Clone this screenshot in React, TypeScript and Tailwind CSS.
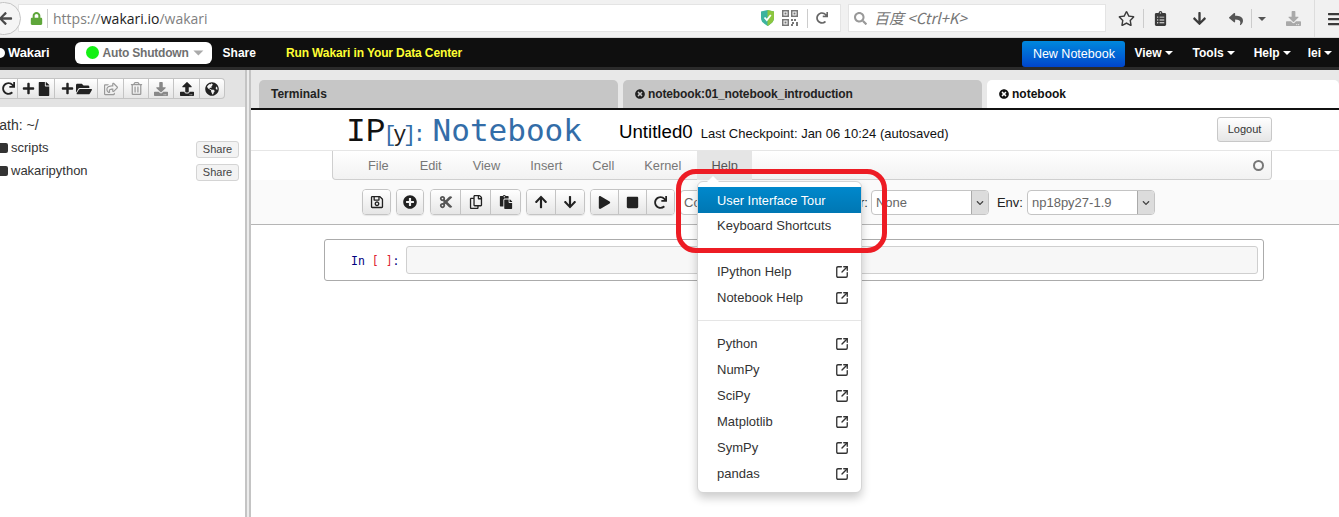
import React from "react";
import {
  FaArrowLeft, FaLock, FaRedo, FaSearch, FaRegStar, FaClipboardList, FaArrowDown, FaReply, FaDownload, FaBars,
  FaPlus, FaFile, FaFolderOpen, FaRegShareSquare, FaRegTrashAlt, FaUpload, FaGlobeAmericas, FaTimesCircle, FaRegSave, FaPlusCircle,
  FaCut, FaRegCopy, FaPaste, FaArrowUp, FaPlay, FaStop, FaChevronDown,
} from "react-icons/fa";
import { SquareArrowOutUpRight } from "lucide-react";

const Caret = ({ c = "border-t-white" }: { c?: string }) => (
  <span className={`ml-[3px] inline-block h-0 w-0 border-x-[4px] border-t-[4px] border-x-transparent align-middle ${c}`} />
);

function Shield() {
  return (
    <svg width="13" height="16" viewBox="0 0 13 16">
      <path d="M0 1.5 L6.5 0 L13 1.5 V8 C13 12 9 14.5 6.5 16 C4 14.5 0 12 0 8 Z" fill="#3db39e" />
      <path d="M6.5 0 L13 1.5 V8 C13 12 9 14.5 6.5 16 Z" fill="#8cc63f" />
      <path d="M3.5 7.5 L5.8 10 L9.8 5" stroke="#fff" strokeWidth="1.8" fill="none" />
    </svg>
  );
}

function Qr() {
  return (
    <svg width="16" height="16" viewBox="0 0 16 16" fill="#777">
      <path d="M0 0h7v7H0z M1.5 1.5v4h4v-4z M9 0h7v7H9z M10.5 1.5v4h4v-4z M0 9h7v7H0z M1.5 10.5v4h4v-4z" fillRule="evenodd" />
      <path d="M2.5 2.5h2v2h-2z M11.5 2.5h2v2h-2z M2.5 11.5h2v2h-2z M9 9h2v2H9z M12 9h2v2h-2z M10 12h2v2h-2z M14 12h2v4h-2z M9 14h2v2H9z" />
    </svg>
  );
}

function BrowserBar() {
  return (
    <div className="flex h-[38px] items-start border-b border-[#d8d8d8] bg-[#f1f1f1]">
      <div className="relative z-10 -ml-[14px] mt-[2px] flex h-[33px] w-[35px] shrink-0 items-center justify-end rounded-full border border-[#c4c4c4] bg-[#f5f5f5] pr-[7px] text-[#4a4a4a]">
        <FaArrowLeft size={15} />
      </div>
      <div className="-ml-[3px] mt-[4px] flex h-[28px] w-[823px] shrink-0 items-center border border-[#e4e4e4] bg-white pl-[11px]">
        <FaLock size={13} className="text-[#5ea63a]" />
        <span className="ml-[4px] h-[19px] w-px bg-[#ccc]" />
        <span className="ml-[5px] flex-1 font-['Open_Sans'] text-[14px] text-[#808080]">
          https://<span className="text-[#222]">wakari.io</span>/wakari
        </span>
        <Shield />
        <span className="ml-[8px] flex"><Qr /></span>
        <span className="ml-[9px] h-[19px] w-px bg-[#ccc]" />
        <FaRedo size={12} className="ml-[8px] mr-[12px] text-[#666]" />
      </div>
      <div className="ml-[7px] mt-[4px] flex h-[28px] w-[258px] shrink-0 items-center border border-[#e4e4e4] bg-white pl-[5px] text-[15px] italic text-[#777]">
        <FaSearch size={13} className="text-[#999]" />
        <span className="ml-[7px] font-['Noto_Sans_CJK_SC']">百度 &lt;Ctrl+K&gt;</span>
      </div>
      <div className="flex h-[37px] flex-1 items-center text-[#3b3b3b]">
        <FaRegStar size={17} className="ml-[12px]" />
        <span className="ml-[8px] h-[19px] w-px bg-[#ccc]" />
        <FaClipboardList size={15} className="ml-[9px]" />
        <FaArrowDown size={15} className="ml-[24px]" />
        <FaReply size={14} className="ml-[22px] text-[#555]" />
        <span className="ml-[8px] h-[19px] w-px bg-[#ccc]" />
        <span className="ml-[3px] flex"><Caret c="border-t-[#555]" /></span>
        <FaDownload size={15} className="ml-[20px] text-[#a9a9a9]" />
        <span className="ml-[13px] h-[37px] w-px bg-[#ddd]" />
        <FaBars size={16} className="ml-[12px]" />
      </div>
    </div>
  );
}

function TopNav() {
  return (
    <div className="flex h-[32px] items-center border-b-[3px] border-[#2b2b2b] bg-[#0f0f0f] text-[12px] font-bold text-white">
      <span className="-ml-[5px] h-[10px] w-[10px] rounded-full bg-white" />
      <span className="ml-[3px] text-[13px] tracking-[-0.1px]">Wakari</span>
      <div className="ml-[25px] flex h-[22px] w-[137px] items-center rounded-[6px] bg-white pl-[11px] text-[#6f6f6f]">
        <span className="h-[13px] w-[13px] rounded-full bg-[#14f014]" />
        <span className="ml-[4px] tracking-[-0.2px]">Auto Shutdown</span>
        <span className="ml-[2px] flex scale-125"><Caret c="border-t-[#aaa]" /></span>
      </div>
      <span className="ml-[11px]">Share</span>
      <span className="ml-[30px] tracking-[-0.12px] text-[#ffff33]">Run Wakari in Your Data Center</span>
      <div className="ml-auto mt-[3px] flex h-[26px] w-[103px] items-center justify-center rounded-[3px] bg-gradient-to-b from-[#0088dd] to-[#0044cc] text-[12.5px] font-normal">
        New Notebook
      </div>
      <span className="ml-[9px]">View<Caret /></span>
      <span className="ml-[20px]">Tools<Caret /></span>
      <span className="ml-[19px]">Help<Caret /></span>
      <span className="ml-[17px] mr-[7px]">lei<Caret /></span>
    </div>
  );
}

const fileButtons = [
  { w: "w-[18px]", icon: <FaRedo size={13} />, extra: "" },
  { w: "w-[37px]", icon: <><FaPlus size={13} /><FaFile size={14} className="ml-[2px]" /></>, extra: "" },
  { w: "w-[43px]", icon: <><FaPlus size={13} /><FaFolderOpen size={16} className="ml-[2px]" /></>, extra: "" },
  { w: "w-[26px]", icon: <FaRegShareSquare size={14} />, extra: "text-[#999]" },
  { w: "w-[25px]", icon: <FaRegTrashAlt size={13} />, extra: "text-[#999]" },
  { w: "w-[25px]", icon: <FaDownload size={14} />, extra: "text-[#888]" },
  { w: "w-[26px]", icon: <FaUpload size={14} />, extra: "" },
  { w: "w-[25px]", icon: <FaGlobeAmericas size={14} />, extra: "" },
];

function Sidebar() {
  return (
    <div className="w-[245px] shrink-0 bg-white">
      <div className="flex h-[37px] items-start bg-[#e3e3e3] pt-[8px]">
        {fileButtons.map((b, i) => (
          <div
            key={i}
            className={`flex h-[21px] items-center justify-center border-y border-r border-[#c4c4c4] bg-gradient-to-b from-white to-[#e6e6e6] text-[#222] last:rounded-r-[4px] ${b.w} ${b.extra}`}
          >
            {b.icon}
          </div>
        ))}
      </div>
      <div className="-ml-[10px] mt-[10px] text-[14px] leading-[16px] text-[#333]">Path: ~/</div>
      {["scripts", "wakaripython"].map((n, i) => (
        <div key={n} className={`flex h-[18px] items-center pr-[6px] text-[13px] text-[#333] ${i === 0 ? "mt-[6px]" : "mt-[5px]"}`}>
          <span className="-ml-[4px] h-[10px] w-[12px] rounded-[2px] bg-[#333]" />
          <span className="ml-[3px]">{n}</span>
          <span className="ml-auto mt-[3px] flex h-[17px] w-[43px] items-center justify-center rounded-[3px] border border-[#d4d4d4] bg-[#f3f3f3] text-[11px] text-[#444]">Share</span>
        </div>
      ))}
    </div>
  );
}

function Tabs() {
  const tab = "flex h-[28px] items-center rounded-t-[5px] text-[12px] font-bold";
  return (
    <div className="flex h-[40px] items-end gap-[5px] border-b-2 border-[#111] bg-[#e8e8e8] pl-[8px]">
      <div className={`${tab} w-[359px] bg-[#c6c6c6] pl-[12px] text-[#222]`}>Terminals</div>
      <div className={`${tab} w-[359px] bg-[#c6c6c6] pl-[12px] tracking-[-0.12px] text-[#222]`}>
        <FaTimesCircle size={10} className="mr-[3px]" />notebook:01_notebook_introduction
      </div>
      <div className={`${tab} flex-1 bg-white pl-[12px] text-[#111]`}>
        <FaTimesCircle size={10} className="mr-[3px]" />notebook
      </div>
    </div>
  );
}

function NotebookHeader() {
  return (
    <div className="flex h-[41px] items-start border-b border-[#e6e6e6] pl-[95px]">
      <div className="flex h-[40px] items-baseline font-['DejaVu_Sans_Mono'] leading-[41px]">
        <span className="font-['Liberation_Mono'] text-[33px] text-[#111]">IP</span>
        <span className="-ml-[2px] w-[41px] font-['Liberation_Mono'] text-[22px] tracking-[-3.5px] text-[#336da8]">[<span className="text-[#222]">y</span>]:</span>
        <span className="ml-[8px] text-[31px] text-[#336da8]">Notebook</span>
      </div>
      <span className="ml-[37px] mt-[9px] text-[18.7px] leading-[26px] text-black">Untitled0</span>
      <span className="ml-[8px] mt-[15px] text-[13px] leading-[18px] text-[#111]">Last Checkpoint: Jan 06 10:24 (autosaved)</span>
      <span className="ml-auto mr-[67px] mt-[7px] flex h-[25px] w-[55px] items-center justify-center rounded-[3px] border border-[#c8c8c8] bg-gradient-to-b from-white to-[#e6e6e6] text-[11px] text-[#333]">Logout</span>
    </div>
  );
}

function MenuBar() {
  const items = [
    ["File", "ml-[35px] pt-[2px]"],
    ["Edit", "ml-[31px] pt-[2px]"],
    ["View", "ml-[31px] pt-[2px]"],
    ["Insert", "ml-[30px] pt-[2px]"],
    ["Cell", "ml-[30px] pt-[2px]"],
    ["Kernel", "ml-[30px] pt-[2px]"],
  ];
  return (
    <div className="relative ml-[81px] mr-[67px] flex h-[29px] items-center rounded-b-[4px] border border-t-0 border-[#cfcfcf] bg-gradient-to-b from-white to-[#f2f2f2] text-[12.8px] text-[#777]">
      {items.map(([t, c]) => <span key={t} className={c}>{t}</span>)}
      <span className="ml-[16px] flex h-[29px] w-[55px] items-center justify-center bg-[#e5e5e5] pt-[2px] text-[#555]">Help</span>
      <span className="absolute right-[7px] top-[9px] h-[11px] w-[11px] rounded-full border-2 border-[#777]" />
    </div>
  );
}

function TB({ groups }: { groups: { w: string; icon: React.ReactNode }[] }) {
  return (
    <div className="flex h-[26px] overflow-hidden rounded-[4px] border border-[#c4c4c4] shadow-[0_1px_1px_rgba(0,0,0,0.08)]">
      {groups.map((g, i) => (
        <div key={i} className={`flex items-center justify-center border-r border-[#c4c4c4] bg-gradient-to-b from-white to-[#e6e6e6] text-[#222] last:border-r-0 ${g.w}`}>{g.icon}</div>
      ))}
    </div>
  );
}

function Select({ w, text }: { w: string; text: string }) {
  return (
    <div className={`flex h-[25px] items-center overflow-hidden rounded-[4px] border border-[#c4c4c4] bg-white text-[13px] text-[#666] ${w}`}>
      <span className="flex-1 pl-[4px] pt-[1px]">{text}</span>
      <span className="flex h-full w-[17px] items-center justify-center border-l border-[#aaa] bg-[#dcdcdc] text-[#444]"><FaChevronDown size={8} /></span>
    </div>
  );
}

function Toolbar() {
  return (
    <div className="flex h-[45px] items-start border-b border-[#b5b5b5] bg-[#fafafa] pl-[111px] pt-[9px]">
      <TB groups={[{ w: "w-[27px]", icon: <FaRegSave size={14} /> }]} />
      <div className="ml-[5px]"><TB groups={[{ w: "w-[26px]", icon: <FaPlusCircle size={14} /> }]} /></div>
      <div className="ml-[6px]"><TB groups={[
        { w: "w-[30px]", icon: <FaCut size={14} className="text-[#555]" /> },
        { w: "w-[30px]", icon: <FaRegCopy size={14} /> },
        { w: "w-[29px]", icon: <FaPaste size={14} /> },
      ]} /></div>
      <div className="ml-[5px]"><TB groups={[
        { w: "w-[29px]", icon: <FaArrowUp size={14} /> },
        { w: "w-[28px]", icon: <FaArrowDown size={14} /> },
      ]} /></div>
      <div className="ml-[5px]"><TB groups={[
        { w: "w-[28px]", icon: <FaPlay size={13} /> },
        { w: "w-[28px]", icon: <FaStop size={13} /> },
        { w: "w-[27px]", icon: <FaRedo size={13} /> },
      ]} /></div>
      <div className="ml-[5px] mt-[1px] flex h-[25px] w-[170px] items-center rounded-l-[4px] border border-[#c4c4c4] bg-white pl-[3px] pt-[1px] text-[13px] text-[#666]">Co</div>
      <span className="ml-[10px] mt-[6px] text-[13px] leading-[16px] text-[#333]">r:</span>
      <div className="ml-[3px] mt-[1px]"><Select w="w-[118px]" text="None" /></div>
      <span className="ml-[8px] mt-[6px] text-[13px] leading-[16px] text-[#222]">Env:</span>
      <div className="ml-[4px] mt-[1px]"><Select w="w-[128px]" text="np18py27-1.9" /></div>
    </div>
  );
}

function Cell() {
  return (
    <div className="ml-[73px] mr-[75px] mt-[14px] flex h-[42px] items-center rounded-[3px] border border-[#ababab] bg-white pl-[26px] pr-[5px]">
      <span className="w-[55px] pt-[3px] font-['DejaVu_Sans_Mono'] text-[11.5px] text-[#000080]">
        In <span className="text-[#d23]">[ ]</span>:
      </span>
      <div className="h-[28px] flex-1 rounded-[3px] border border-[#cfcfcf] bg-[#f7f7f7]" />
    </div>
  );
}

function HelpMenu() {
  const groups = [["IPython Help", "Notebook Help"], ["Python", "NumPy", "SciPy", "Matplotlib", "SymPy", "pandas"]];
  return (
    <div className="absolute left-[697px] top-[181px] z-20 w-[165px] rounded-[6px] border border-[#d5d5d5] bg-white py-[5px] text-[13px] text-[#333] shadow-[0_5px_10px_rgba(0,0,0,0.2)]">
      <div className="absolute -top-[6px] left-[9px] h-0 w-0 border-x-[6px] border-b-[6px] border-x-transparent border-b-white" />
      <div className="flex h-[26px] items-center bg-gradient-to-b from-[#0088cc] to-[#0077b3] pl-[19px] pt-[2px] text-[12.8px] text-white">User Interface Tour</div>
      <div className="flex h-[26px] items-center pl-[19px]">Keyboard Shortcuts</div>
      <div className="mb-[10px] mt-[9px] h-px bg-[#e5e5e5]" />
      {groups.map((g, i) => (
        <div key={i}>
          {g.map((t) => (
            <div key={t} className="flex h-[26px] items-center justify-between pl-[19px] pr-[12px]">
              <span>{t}</span>
              <SquareArrowOutUpRight size={14} strokeWidth={2.3} className="text-[#333]" />
            </div>
          ))}
          {i === 0 && <div className="mb-[10px] mt-[9px] h-px bg-[#e5e5e5]" />}
        </div>
      ))}
    </div>
  );
}

export default function App() {
  return (
    <div className="relative h-[517px] w-[1339px] overflow-hidden bg-white font-['Liberation_Sans',sans-serif]">
      <BrowserBar />
      <TopNav />
      <div className="flex h-[447px]">
        <Sidebar />
        <div className="w-[6px] shrink-0 border-x-2 border-[#c4c4c4] bg-[#ececec]" />
        <div className="flex-1">
          <Tabs />
          <NotebookHeader />
          <MenuBar />
          <Toolbar />
          <Cell />
        </div>
      </div>
      <HelpMenu />
      <div className="absolute left-[676px] top-[169px] z-30 h-[84px] w-[211px] rounded-[20px] border-[5px] border-[#ed1c24]" />
    </div>
  );
}
